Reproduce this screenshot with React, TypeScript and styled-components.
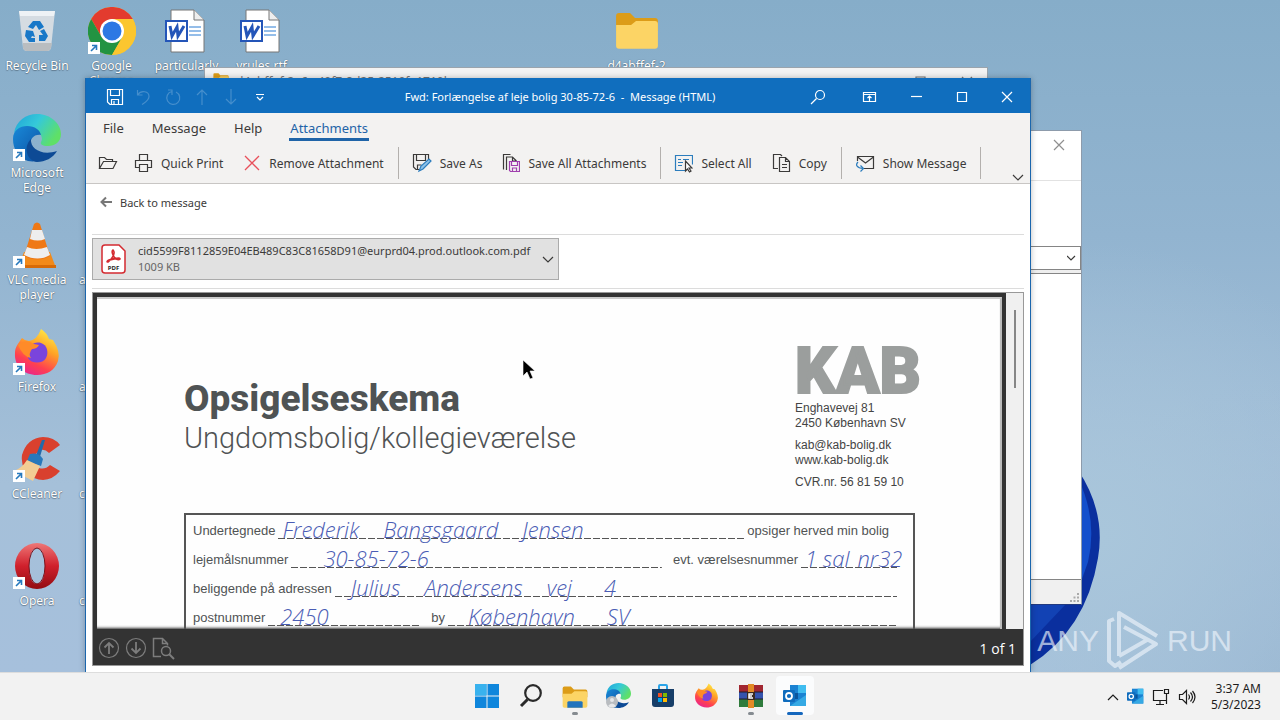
import React from "react";
import styled, { createGlobalStyle, css } from "styled-components";

const ui = '"Noto Sans", "Open Sans", sans-serif';
const print = '"Liberation Sans", Arial, sans-serif';

const GlobalStyle = createGlobalStyle`
  * { box-sizing: border-box; }
  body { margin: 0; font-family: ${ui}; font-size: 12px; color: #3b3a39; overflow: hidden; }
  button { font: inherit; color: inherit; background: none; border: 0; padding: 0; cursor: default; }
  svg { display: block; flex: none; }
  h1, h2, p { margin: 0; }
`;

/* ---------- desktop ---------- */

const Screen = styled.div`
  display: flex;
  flex-direction: column;
  height: 100vh;
`;

const Desktop = styled.main`
  position: relative;
  flex: 1;
  min-height: 0;
  overflow: hidden;
  background: linear-gradient(180deg, #86adc9 0%, #92b4d0 35%, #a5c0d9 72%, #a6c0dc 100%);
`;

const Glow = styled.div`
  position: absolute;
  inset: 0;
  background: radial-gradient(circle at 86% 80%, #a9c6db 0, #a4c0d800 24%),
    radial-gradient(circle at 100% 100%, #9ab7d2 0, #9ab7d200 20%);
`;

const Bloom = styled.svg`
  position: absolute;
  right: 180px;
  bottom: 0;
`;

const IconGrid = styled.div`
  position: relative;
  display: grid;
  grid-template-columns: 74px repeat(8, 75px);
  grid-auto-rows: 107px;
  padding-top: 6px;
`;

const Shortcut = styled.button<{ $col: number; $row: number; $start?: boolean }>`
  grid-column: ${(p) => p.$col};
  grid-row: ${(p) => p.$row};
  display: flex;
  flex-direction: column;
  align-items: ${(p) => (p.$start ? "flex-start" : "center")};
  gap: 2px;
  padding-left: ${(p) => (p.$start ? "5px" : "0")};
  min-width: 0;
  color: #fff;
  line-height: 15px;
  text-shadow: 0 0 1px #456, 0 1px 1px #4568;
`;

const IconBox = styled.span`
  position: relative;
  display: grid;
  place-items: center;
  width: 48px;
  height: 50px;
`;

const Arrow = styled.svg`
  position: absolute;
  left: 0;
  bottom: 2px;
`;

/* ---------- background windows ---------- */

const ExplorerWindow = styled.section`
  position: absolute;
  top: 67px;
  left: 204px;
  right: 292px;
  height: 300px;
  display: flex;
  align-items: flex-start;
  gap: 7px;
  padding: 5px 14px 0 8px;
  background: #f3f3f3;
  border: 1px solid #9aa4ad;
  color: #777;
`;

const ExplorerTitle = styled.span`
  flex: 1;
  line-height: 18px;
`;

const ExplorerControls = styled.div`
  display: flex;
  gap: 34px;
  padding-top: 3px;
`;

const ArchiveWindow = styled.section`
  position: absolute;
  top: 130px;
  right: 198px;
  width: 40%;
  height: 475px;
  display: flex;
  flex-direction: column;
  background: #fff;
  border: 1px solid #8d9bab;
  border-bottom-color: #223a80;
`;

const ArchiveTitle = styled.div`
  display: flex;
  justify-content: flex-end;
  height: 50px;
  padding: 8px 16px;
  border-bottom: 1px solid #e2e2e2;
  color: #8f8f8f;
`;

const ArchiveTools = styled.div`
  height: 65px;
`;

const ArchiveSelect = styled.button`
  display: flex;
  align-items: center;
  justify-content: flex-end;
  height: 24px;
  padding-right: 4px;
  border: 1px solid #858585;
`;

const ArchiveList = styled.div`
  flex: 1;
  margin-top: 3px;
  border: 1px solid #858585;
  border-width: 1px 0;
  box-shadow: 0 -3px 0 #eee;
`;

const ArchiveStatus = styled.div`
  display: flex;
  align-items: flex-end;
  justify-content: flex-end;
  height: 24px;
  padding: 2px;
  background: #f0f0f0;
`;

/* ---------- message window ---------- */

const MailWindow = styled.section`
  position: absolute;
  top: 78px;
  left: 85px;
  right: 249px;
  bottom: 0;
  display: flex;
  flex-direction: column;
  background: #fff;
  border: 1px solid #1b66ad;
  border-width: 0 1px;
  box-shadow: 0 0 6px #0004;
`;

const TitleBar = styled.header`
  display: flex;
  align-items: center;
  height: 35px;
  padding: 2px 16px 0 20px;
  background: #106ebe;
  color: #fff;
  font-size: 11px;
`;

const QuickAccess = styled.div`
  display: flex;
  flex: 1;
  align-items: center;
  gap: 11px;
`;

const WindowControls = styled.div`
  display: flex;
  flex: 1;
  align-items: center;
  justify-content: flex-end;
  gap: 30px;
`;

const BarButton = styled.button<{ $dim?: boolean }>`
  opacity: ${(p) => (p.$dim ? 0.22 : 1)};
`;

const Ribbon = styled.div`
  display: flex;
  flex-direction: column;
  height: 71px;
  background: #f3f2f1;
  border-bottom: 1px solid #c8c6c4;
`;

const Tabs = styled.nav`
  display: flex;
  gap: 26px;
  padding: 6px 16px 0;
  height: 30px;
  font-size: 13px;
`;

const Tab = styled.button<{ $active?: boolean }>`
  height: 22px;
  padding: 0 1px;
  line-height: 19px;
  border-bottom: 3px solid transparent;
  ${(p) =>
    p.$active &&
    css`
      color: #1f64a8;
      border-bottom-color: #1f64a8;
    `}
`;

const Tools = styled.div`
  display: flex;
  align-items: center;
  height: 40px;
  padding: 0 6px 0 12px;
`;

const Tool = styled.button<{ $last?: boolean }>`
  display: flex;
  align-items: center;
  gap: 8px;
  height: 32px;
  margin-right: ${(p) => (p.$last ? 14 : 20)}px;
  white-space: nowrap;
`;

const OpenTool = styled(Tool)`
  margin-right: 16px;
`;

const Divider = styled.span`
  width: 1px;
  height: 32px;
  margin-right: 13px;
  background: #b3b0ad;
`;

const Expand = styled.button`
  align-self: flex-end;
  margin-left: auto;
  padding-bottom: 2px;
`;

const Body = styled.div`
  flex: 1;
  min-height: 0;
  display: flex;
  flex-direction: column;
  padding: 0 6px 6px;
`;

const BackRow = styled.div`
  display: flex;
  align-items: flex-start;
  height: 51px;
  padding: 9px 8px 0;
  border-bottom: 1px solid #dcdcdc;
  font-size: 11px;
`;

const BackButton = styled.button`
  display: flex;
  align-items: center;
  gap: 7px;
  height: 18px;
`;

const AttachmentRow = styled.div`
  display: flex;
  height: 54px;
  padding: 3px 0 8px;
  border-bottom: 1px solid #dcdcdc;
`;

const Attachment = styled.button`
  display: flex;
  align-items: center;
  gap: 12px;
  height: 42px;
  padding: 0 4px 0 8px;
  border: 1px solid #ababab;
  background: #e1e1e1;
  font-size: 11px;
  line-height: 16px;
  text-align: left;
`;

const FileSize = styled.span`
  display: block;
  color: #666;
`;

const Preview = styled.div`
  position: relative;
  flex: 1;
  min-height: 0;
  display: flex;
  flex-direction: column;
  margin-top: 3px;
  background: #333;
  border: 1px solid #999;
`;

const PageArea = styled.div`
  flex: 1;
  min-height: 0;
  display: flex;
  padding: 4px 0 0 4px;
`;

const Paper = styled.article`
  flex: 1;
  min-width: 0;
  overflow: hidden;
  padding: 48px 85px 0 87px;
  background: #fefefe;
  border-top: 2px solid #ccc;
  border-right: 2px solid #bbb;
  color: #505354;
  font-family: ${print};
  box-shadow: inset 0 -3px 3px -2px #333;
`;

const ScrollTrack = styled.div`
  width: 17px;
  margin: -4px 0 0 4px;
  padding: 17px 7px 0 8px;
  background: #f0f0f0;
`;

const ScrollThumb = styled.div`
  width: 2px;
  height: 78px;
  background: #868686;
`;

const PreviewBar = styled.footer`
  display: flex;
  align-items: center;
  gap: 5px;
  height: 36px;
  padding: 2px 7px 0 5px;
  color: #7d7d7d;
`;

const PageCount = styled.span`
  margin-left: auto;
  color: #fff;
  font-family: "Open Sans", sans-serif;
  font-size: 14px;
`;

/* ---------- scanned form ---------- */

const Letterhead = styled.div`
  display: flex;
  justify-content: space-between;
  height: 166px;
`;

const FormTitle = styled.h1`
  padding-top: 29px;
  font-family: Roboto, sans-serif;
  font-size: 37px;
  line-height: 46px;
  font-weight: 800;
  color: #4f5354;
`;

const FormSubtitle = styled.h2`
  font-family: Roboto, sans-serif;
  font-size: 29px;
  line-height: 32px;
  font-weight: 300;
`;

const Sender = styled.address`
  width: 120px;
  font-size: 12px;
  line-height: 15px;
  font-style: normal;
  white-space: nowrap;
  color: #444;
`;

const Brand = styled.p`
  height: 54px;
  font-family: Roboto, sans-serif;
  font-size: 64px;
  line-height: 50px;
  font-weight: 900;
  color: #9b9e9d;
  -webkit-text-stroke: 2px #9b9e9d;
`;

const SenderLine = styled.p<{ $spaced?: boolean }>`
  margin-top: ${(p) => (p.$spaced ? "7px" : "0")};
`;

const FormBox = styled.div`
  border: 2px solid #555;
  padding: 0 16px 0 7px;
  height: 400px;
`;

const Line = styled.div`
  display: flex;
  align-items: flex-end;
  gap: 3px;
  height: 29px;
  padding-bottom: 5px;
  font-size: 13px;
  line-height: 16px;
  white-space: nowrap;
`;

const Blank = styled.span<{ $width?: number }>`
  display: flex;
  flex: ${(p) => (p.$width ? `0 0 ${p.$width}px` : "1")};
  min-width: 0;
  height: 17px;
  align-items: flex-end;
  background: repeating-linear-gradient(90deg, #555 0 7px, #5550 7px 9px) bottom / 100% 1px no-repeat;
`;

const Ink = styled.span<{ $before: number }>`
  margin-left: ${(p) => p.$before}px;
  color: #4a5cb4;
  font-family: "Open Sans", sans-serif;
  font-size: 22px;
  line-height: 20px;
  font-style: italic;
  font-weight: 300;
`;

const Space = styled.span`
  width: 5px;
`;

/* ---------- overlays ---------- */

const Pointer = styled.svg`
  position: absolute;
  left: 523px;
  top: 360px;
`;

const Watermark = styled.div`
  position: absolute;
  right: 48px;
  bottom: 0;
  display: flex;
  align-items: center;
  gap: 7px;
  color: #eef4fb;
  opacity: 0.65;
  font-family: "Liberation Sans Narrow", "Liberation Sans", sans-serif;
  font-size: 30px;
  line-height: 62px;
`;

/* ---------- taskbar ---------- */

const Taskbar = styled.footer`
  display: grid;
  grid-template-columns: 1fr auto 1fr;
  height: 48px;
  background: #f2f2f2;
  border-top: 1px solid #ddd;
`;

const Apps = styled.nav`
  grid-column: 2;
  display: flex;
  padding-left: 1px;
`;

const AppButton = styled.button<{ $active?: boolean; $open?: boolean }>`
  display: flex;
  flex-direction: column;
  align-items: center;
  justify-content: flex-end;
  gap: 4px;
  width: 38px;
  height: 39px;
  margin: 3px 3px 0;
  border-radius: 4px;
  background: ${(p) => (p.$active ? "#fbfcfd" : "transparent")};

  &::after {
    content: "";
    width: ${(p) => (p.$active ? 16 : 6)}px;
    height: 3px;
    border-radius: 2px;
    background: ${(p) => (p.$active ? "#1567bd" : p.$open ? "#858b90" : "transparent")};
  }
`;

const Tray = styled.div`
  display: flex;
  align-items: center;
  justify-content: flex-end;
  gap: 8px;
  padding-right: 19px;
  color: #1c1c1c;
`;

const Clock = styled.time`
  margin-left: 7px;
  font-size: 12px;
  line-height: 16px;
  text-align: right;
`;

/* ---------- drawings ---------- */

const stroke = { fill: "none", stroke: "currentColor", strokeWidth: 1.2 } as const;

const Glyph = ({ d, w = 18, h = 18, children }: { d?: string; w?: number; h?: number; children?: React.ReactNode }) => (
  <svg width={w} height={h} viewBox={`0 0 ${w} ${h}`} {...stroke} aria-hidden="true">
    {d && <path d={d} />}
    {children}
  </svg>
);

const RecycleBin = () => (
  <svg width="38" height="44" viewBox="0 0 38 44">
    <path d="M1 2h36l-4 37q-1 3-4 3H9q-3 0-4-3z" fill="#d5dce2" />
    <path d="M1 2h36l-1 5H2z" fill="#eef2f5" />
    <path d="M5 34h29l-1 5q-1 3-4 3H9q-3 0-4-3z" fill="#b9bdc0" />
    <g fill="#1878c8">
      <path d="M15 12h7l4 6-5 3-3-5-3 4-5-2z" />
      <path d="M26 20l4 7-3 5h-6v-6h4l-3-4z" />
      <path d="M8 21l7 1 2 6-3-1-1 2h4v4h-6l-4-6z" />
    </g>
  </svg>
);

const Chrome = () => (
  <svg width="48" height="48" viewBox="0 0 48 48">
    <circle cx="24" cy="24" r="24" fill="#fbc62f" />
    <path d="M3.200 12A24 24 0 0 1 44.800 12H24L13.600 30z" fill="#e33b2e" />
    <path d="M3.200 12A24 24 0 0 0 24 48l10.400-18H13.600z" fill="#229342" />
    <path d="M24 48a24 24 0 0 0 20.800-36H24l10.400 18z" fill="#fbc62f" />
    <circle cx="24" cy="24" r="12" fill="#fff" />
    <circle cx="24" cy="24" r="9.500" fill="#2d78e4" />
  </svg>
);

const WordDoc = () => (
  <svg width="44" height="44" viewBox="0 0 44 44">
    <path d="M6 1h23l10 10v32H6z" fill="#fff" stroke="#777" />
    <path d="M29 1v10h10" fill="#eee" stroke="#777" />
    <path d="M24 18h12M24 22h12M24 26h12" stroke="#2b7cd3" />
    <path d="M1 12h21v20H1z" fill="#fff" stroke="#2455b8" strokeWidth="2" />
    <path d="M5 17l2 10 5-9 1 9 6-10" fill="none" stroke="#2455b8" strokeWidth="3" />
  </svg>
);

const Edge = ({ size = 48 }: { size?: number }) => (
  <svg width={size} height={size} viewBox="0 0 48 48">
    <defs>
      <linearGradient id="edgeTop" x1="0" x2="1" y1="0" y2=".5">
        <stop offset="0" stopColor="#1fa3d8" />
        <stop offset=".5" stopColor="#35c9d9" />
        <stop offset="1" stopColor="#5fe067" />
      </linearGradient>
      <linearGradient id="edgeLow" x1="0" x2="1" y1="0" y2="1">
        <stop offset="0" stopColor="#1989d8" />
        <stop offset="1" stopColor="#0c4ea0" />
      </linearGradient>
    </defs>
    <path d="M1 19C3 7 13 0 24 0c14 0 24 10 24 20 0 8-6 12-13 12-6 0-8-2-7-4 2-3 1-8-5-11C16 13 6 13 1 19z" fill="url(#edgeTop)" />
    <path d="M0 25c0-9 7-13 14-13 8 0 13 4 14 9-7-1-12 4-10 12 2 6 7 10 13 11-4 3-10 4-16 3C5 44 0 35 0 25z" fill="url(#edgeLow)" />
    <path d="M18 25c-1 10 11 17 26 12-4 7-12 11-20 11-9-1-15-14-6-23z" fill="#0d4a95" />
  </svg>
);

const Vlc = () => (
  <svg width="40" height="48" viewBox="0 0 40 48">
    <path d="M7 31h26l6 16H1z" fill="#f28a1a" />
    <path d="M1 44h38v3H1z" fill="#d76b08" />
    <path d="M17 3q3-3 6 0l10 32q-12 7-26 0z" fill="#ef7815" />
    <path d="M15 9h10l3 9q-7 3-15 0zM10 26q9 4 20 0l3 8q-12 7-26 0z" fill="#eee" />
  </svg>
);

const Firefox = ({ size = 48 }: { size?: number }) => (
  <svg width={size} height={size} viewBox="0 0 48 48">
    <defs>
      <linearGradient id="fox" x1=".8" y1="0" x2=".3" y2="1">
        <stop offset="0" stopColor="#fff14a" />
        <stop offset=".4" stopColor="#ffa226" />
        <stop offset=".75" stopColor="#ff4050" />
        <stop offset="1" stopColor="#e8258f" />
      </linearGradient>
    </defs>
    <path d="M9 10q3 3 7 3 8-1 12-12 6 4 8 10l4 1q8 12 5 21C42 42 34 47 24 47 11 47 1 38 2 25c0-6 3-9 7-15z" fill="url(#fox)" />
    <path d="M15 24c0-6 6-11 13-9 6 2 8 9 5 15-3 6-15 6-18 0z" fill="#7a44dc" />
    <path d="M5 17q8-7 16-1l5 1q-2 4-7 4-4 5-1 9-8-1-13-13z" fill="#ff8b28" />
  </svg>
);

const CCleaner = () => (
  <svg width="48" height="46" viewBox="0 0 48 46">
    <path d="M47 9l-11 8q-7-7-13 1-3 9 3 14 6 2 11-3l10 6Q36 48 21 42 7 34 9 19 14 2 30 1q11 0 17 8z" fill="#d9402e" />
    <path d="M29 4h3l-6 20-4-2z" fill="#236aaa" />
    <path d="M17 18q8-2 13 5l-2 7-14-5z" fill="#2878bb" />
    <path d="M14 24l13 6-7 15L1 35q8-3 13-11z" fill="#f2cd94" />
  </svg>
);

const Opera = () => (
  <svg width="44" height="46" viewBox="0 0 44 46">
    <defs>
      <linearGradient id="opera" x1="0" y1="0" x2="0" y2="1">
        <stop offset="0" stopColor="#ee7777" />
        <stop offset=".5" stopColor="#d0202c" />
        <stop offset="1" stopColor="#920c12" />
      </linearGradient>
    </defs>
    <path fillRule="evenodd" d="M22 0a22 23 0 1 0 0 46 22 23 0 0 0 0-46zm0 5c5 0 8 7 8 18s-3 18-8 18-8-7-8-18 3-18 8-18z" fill="url(#opera)" />
    <ellipse cx="22" cy="23" rx="8" ry="18" fill="none" stroke="#7a1018" />
  </svg>
);

const Folder = ({ size = 44, open }: { size?: number; open?: boolean }) => (
  <svg width={size} height={size * 0.86} viewBox="0 0 44 38">
    <path d="M1 4q0-3 3-3h11l5 5h20q3 0 3 3v10H1z" fill="#dc9c18" />
    <path d="M1 13h15l5-4h19q3 0 3 3v22q0 3-3 3H4q-3 0-3-3z" fill="#fcd465" />
    {open && <path d="M9 37V28q0-2 3-2h20q3 0 3 2v9z" fill="#2274bd" />}
  </svg>
);

const ShortcutArrow = () => (
  <Arrow width="12" height="12" viewBox="0 0 12 12">
    <path d="M0 0h12v12H0z" fill="#fff" />
    <path d="M3 9l5-5M4 3.500h4.500V8" fill="none" stroke="#2779bd" strokeWidth="1.600" />
  </Arrow>
);

const OutlookIcon = ({ size = 24 }: { size?: number }) => (
  <svg width={size} height={size} viewBox="0 0 24 24">
    <path d="M7 1h16v21H7z" fill="#1a82d2" />
    <path d="M15 1h8v8h-8z" fill="#40bdf0" />
    <path d="M7 9h8v6H7z" fill="#0b559c" />
    <path d="M7 22l16-11v11z" fill="#35a9e4" />
    <rect x="0" y="6" width="12" height="12" rx="1" fill="#0f6cbd" />
    <circle cx="6" cy="12" r="3" fill="none" stroke="#fff" strokeWidth="1.800" />
  </svg>
);

const WinRar = () => (
  <svg width="24" height="24" viewBox="0 0 24 24">
    <path d="M0 1h24v7H0z" fill="#a12630" />
    <path d="M0 8h24v7H0z" fill="#3553ad" />
    <path d="M0 15h24v8H0z" fill="#2f7b3c" />
    <path d="M0 8h24M0 15h24" stroke="#221a2a" />
    <path d="M9 0h6v24H9z" fill="#e28a25" />
    <path d="M8 8h8v8H8z" fill="#3b2a20" />
    <path d="M14 10h-4v4h4M10 12h3" fill="none" stroke="#fff" strokeWidth="1.500" />
  </svg>
);

const Store = () => (
  <svg width="24" height="24" viewBox="0 0 24 24">
    <path d="M8 6V2q0-1 1-1h6q1 0 1 1v4" fill="none" stroke="#2ba4e8" strokeWidth="2" />
    <path d="M1 5h22v15q0 3-3 3H4q-3 0-3-3z" fill="#173e68" />
    <path d="M7 9h4v4H7z" fill="#f25022" />
    <path d="M12 9h4v4h-4z" fill="#7fba00" />
    <path d="M7 14h4v4H7z" fill="#00a4ef" />
    <path d="M12 14h4v4h-4z" fill="#ffb900" />
  </svg>
);

const StartLogo = () => (
  <svg width="24" height="24" viewBox="0 0 24 24">
    <path d="M0 0h11.500v11.500H0zM12.500 0H24v11.500H12.500zM0 12.500h11.500V24H0zM12.500 12.500H24V24H12.500z" fill="#0f86dc" />
    <path d="M0 0h11.500v11.500H0z" fill="#39b2ee" />
  </svg>
);

const SearchBig = () => (
  <svg width="24" height="24" viewBox="0 0 24 24" fill="none" stroke="#2a2a2a">
    <circle cx="14" cy="9" r="7.800" strokeWidth="2.200" />
    <path d="M8.500 15.500L2 22" strokeWidth="3" />
  </svg>
);

const EdgeProfile = () => (
  <svg width="25" height="25" viewBox="0 0 25 25">
    <Edge size={25} />
    <circle cx="6" cy="19" r="6" fill="#b9bcc0" />
    <circle cx="6" cy="17" r="2" fill="#e6e7e9" />
    <path d="M2 23q4-5 8 0-4 3-8 0z" fill="#e6e7e9" />
  </svg>
);

const PdfIcon = () => (
  <svg width="25" height="30" viewBox="0 0 25 30">
    <path d="M4 1h14l6 6v19q0 3-3 3H4q-3 0-3-3V4q0-3 3-3z" fill="#fff" stroke="#d42a30" strokeWidth="1.500" />
    <path d="M12 6c3 3-1 9-5 12-3 0 2-4 11-4 3 1-1 3-4 0-2-2-4-7-2-8z" fill="none" stroke="#d42a30" strokeWidth="1.600" />
    <text x="12.500" y="26" textAnchor="middle" fontFamily="Open Sans" fontSize="6" fontWeight="700" fill="#222">
      PDF
    </text>
  </svg>
);

const Chevron = ({ up }: { up?: boolean }) => <Glyph w={12} h={8} d={up ? "M1 7l5-5 5 5" : "M1 2l5 5 5-5"} />;

const desktopItems: { name: string; col: number; row: number; icon?: React.ReactNode; link?: boolean }[] = [
  { name: "Recycle Bin", col: 1, row: 1, icon: <RecycleBin /> },
  { name: "Microsoft Edge", col: 1, row: 2, icon: <Edge />, link: true },
  { name: "VLC media player", col: 1, row: 3, icon: <Vlc />, link: true },
  { name: "Firefox", col: 1, row: 4, icon: <Firefox />, link: true },
  { name: "CCleaner", col: 1, row: 5, icon: <CCleaner />, link: true },
  { name: "Opera", col: 1, row: 6, icon: <Opera />, link: true },
  { name: "Google Chrome", col: 2, row: 1, icon: <Chrome />, link: true },
  { name: "a", col: 2, row: 3 },
  { name: "av", col: 2, row: 4 },
  { name: "ca", col: 2, row: 5 },
  { name: "c", col: 2, row: 6 },
  { name: "particularly", col: 3, row: 1, icon: <WordDoc /> },
  { name: "vrules.rtf", col: 4, row: 1, icon: <WordDoc /> },
  { name: "d4abffef-2", col: 9, row: 1, icon: <Folder /> },
];

const ScannedForm = () => (
  <Paper>
    <Letterhead>
      <div>
        <FormTitle>Opsigelseskema</FormTitle>
        <FormSubtitle>Ungdomsbolig/kollegieværelse</FormSubtitle>
      </div>
      <Sender>
        <Brand>KAB</Brand>
        <SenderLine>Enghavevej 81</SenderLine>
        <SenderLine>2450 København SV</SenderLine>
        <SenderLine $spaced>kab@kab-bolig.dk</SenderLine>
        <SenderLine>www.kab-bolig.dk</SenderLine>
        <SenderLine $spaced>CVR.nr. 56 81 59 10</SenderLine>
      </Sender>
    </Letterhead>
    <FormBox>
      <Line>
        Undertegnede
        <Blank>
          <Ink $before={4}>Frederik</Ink>
          <Ink $before={24}>Bangsgaard</Ink>
          <Ink $before={24}>Jensen</Ink>
        </Blank>
        opsiger herved min bolig
        <Space />
      </Line>
      <Line>
        lejemålsnummer
        <Blank>
          <Ink $before={32}>30-85-72-6</Ink>
        </Blank>
        <Space />
        evt. værelsesnummer
        <Blank $width={96}>
          <Ink $before={4}>1 sal</Ink>
          <Ink $before={8}>nr32</Ink>
        </Blank>
      </Line>
      <Line>
        beliggende på adressen
        <Blank>
          <Ink $before={16}>Julius</Ink>
          <Ink $before={24}>Andersens</Ink>
          <Ink $before={24}>vej</Ink>
          <Ink $before={32}>4</Ink>
        </Blank>
      </Line>
      <Line>
        postnummer
        <Blank $width={152}>
          <Ink $before={12}>2450</Ink>
        </Blank>
        <Space />
        by
        <Blank>
          <Ink $before={20}>København</Ink>
          <Ink $before={32}>SV</Ink>
        </Blank>
      </Line>
    </FormBox>
  </Paper>
);

export default function App() {
  return (
    <Screen>
      <GlobalStyle />
      <Desktop>
        <Glow />
        <Bloom width="70" height="202" viewBox="0 0 70 202">
          <path d="M0 0h48q28 42 20 88-12 72-68 107z" fill="#0a2f9e" />
          <path d="M48 8q20 42 10 84l-10 28z" fill="#1450cc" />
          <path d="M0 172l36-38H0z" fill="#1242b4" />
        </Bloom>
        <IconGrid>
          {desktopItems.map((item) => (
            <Shortcut key={item.name} $col={item.col} $row={item.row} $start={!item.icon}>
              <IconBox>
                {item.icon}
                {item.link && <ShortcutArrow />}
              </IconBox>
              <span>{item.name}</span>
            </Shortcut>
          ))}
        </IconGrid>

        <ExplorerWindow>
          <Folder size={16} />
          <ExplorerTitle>d4abffef-2a6c-40f7-8d25-2510fe1710b</ExplorerTitle>
          <ExplorerControls>
            <Glyph w={12} h={12} d="M1 1h9v9H1z" />
            <Glyph w={12} h={12} d="M1 1l10 10M11 1L1 11" />
          </ExplorerControls>
        </ExplorerWindow>

        <ArchiveWindow>
          <ArchiveTitle>
            <Glyph w={12} h={12} d="M1 1l10 10M11 1L1 11" />
          </ArchiveTitle>
          <ArchiveTools />
          <ArchiveSelect aria-label="Folder path">
            <Glyph w={9} h={6} d="M0 1l4 4 4-4" />
          </ArchiveSelect>
          <ArchiveList />
          <ArchiveStatus>
            <svg width="9" height="9" viewBox="0 0 9 9" fill="#aaa">
              <path d="M7 0h2v2H7zM7 3.500h2v2H7zM7 7h2v2H7zM3.500 3.500h2v2h-2zM3.500 7h2v2h-2zM0 7h2v2H0z" />
            </svg>
          </ArchiveStatus>
        </ArchiveWindow>

        <MailWindow>
          <TitleBar>
            <QuickAccess>
              <BarButton aria-label="Save">
                <Glyph d="M1.500 1.500h15v15H4l-2.500-2.500zM4.500 1.500v6h9v-6M5.500 16.500v-5h7v5M8 16v-3" />
              </BarButton>
              <BarButton $dim aria-label="Undo">
                <Glyph d="M2.500 2v5h5M3 6.500C6 2 14 3 14 8.500c0 4-4 6-7 8" />
              </BarButton>
              <BarButton $dim aria-label="Redo">
                <Glyph d="M4 2h4v5M8 3.500A6.500 6.500 0 1 0 12 4" />
              </BarButton>
              <BarButton $dim aria-label="Previous item">
                <Glyph d="M9 17V2M4 7l5-5 5 5" />
              </BarButton>
              <BarButton $dim aria-label="Next item">
                <Glyph d="M9 1v15M4 11l5 5 5-5" />
              </BarButton>
              <BarButton aria-label="Customize">
                <Glyph d="M5 6.500h8M6 9l3 3 3-3" />
              </BarButton>
            </QuickAccess>
            <span>Fwd: Forlængelse af leje bolig 30-85-72-6&nbsp; -&nbsp; Message (HTML)</span>
            <WindowControls>
              <BarButton aria-label="Search">
                <Glyph w={22} h={16}>
                  <circle cx="10" cy="6" r="4.500" />
                  <path d="M6.500 9.500L1 15" />
                </Glyph>
              </BarButton>
              <BarButton aria-label="Ribbon display options">
                <Glyph w={16} h={12} d="M1.500 1.500h12v9h-12zM1.500 3.500h12M7.500 10V5M5.500 7l2-2 2 2" />
              </BarButton>
              <BarButton aria-label="Minimize">
                <Glyph w={16} h={12} d="M3 5.500h11" />
              </BarButton>
              <BarButton aria-label="Maximize">
                <Glyph w={16} h={12} d="M3.500 1.500h9v9h-9z" />
              </BarButton>
              <BarButton aria-label="Close">
                <Glyph w={14} h={12} d="M2 1l10 10M12 1L2 11" />
              </BarButton>
            </WindowControls>
          </TitleBar>

          <Ribbon>
            <Tabs>
              <Tab>File</Tab>
              <Tab>Message</Tab>
              <Tab>Help</Tab>
              <Tab $active>Attachments</Tab>
            </Tabs>
            <Tools>
              <OpenTool aria-label="Open">
                <Glyph w={20} d="M1.500 14.500V3.500h5l2 2h6v2.500M1.500 14.500l4-7h13l-3.500 7z" />
              </OpenTool>
              <Tool>
                <Glyph w={19} d="M5.500 6.500v-6h8v6M5.500 13.500h-4v-7h16v7h-4M5.500 10.500h8v7h-8z" />
                Quick Print
              </Tool>
              <Tool $last>
                <svg width="18" height="18" viewBox="0 0 18 18" stroke="#e8505b" strokeWidth="1.300">
                  <path d="M2 2l14 14M16 2L2 16" />
                </svg>
                Remove Attachment
              </Tool>
              <Divider />
              <Tool>
                <Glyph w={20} h={20}>
                  <path d="M9 16.500H4L1.500 14V1.500h15v6M4.500 1.500v6h9v-6M5.500 16v-4h4" />
                  <path d="M7 18l2-5 8-7 2 2-8 8z" fill="#8fc3ea" stroke="#2c7dbd" />
                </Glyph>
                Save As
              </Tool>
              <Tool $last>
                <Glyph h={20}>
                  <path d="M1.500 16.500v-15h7M4.500 17v-13h6l4 4M10.500 4v4h4" />
                  <path d="M7.500 8.500h10v10h-9l-1-1zM9.500 8.500v4h6v-4M10.500 18v-3h4v3" stroke="#a03fae" />
                </Glyph>
                Save All Attachments
              </Tool>
              <Divider />
              <Tool>
                <Glyph w={19} h={20}>
                  <path d="M11 17.500H1.500v-15h17v9M4 6.500h3M4 9.500h5M4 12.500h4M9 6.500h6" stroke="#2c7dbd" />
                  <path d="M11.500 8v10l2-2 2 3 1.500-1-2-3h3z" fill="#fff" />
                </Glyph>
                Select All
              </Tool>
              <Tool $last>
                <Glyph w={19} h={20} d="M6 15.500H1.500v-14h7l1.500 1.500M7.500 4.500h6l4 4v10h-10zM13.500 4.500v4h4M10 11.500h5M10 14.500h5" />
                Copy
              </Tool>
              <Divider />
              <Tool $last>
                <Glyph w={20} h={20}>
                  <path d="M2.500 8V3.500h16v12H9M2.500 4l8 6 8-6" />
                  <path d="M3 9c-3 3-1 6 5 6.500M5.500 12.500l3 3-3 3" stroke="#2c7dbd" />
                </Glyph>
                Show Message
              </Tool>
              <Divider />
              <Expand aria-label="Expand ribbon">
                <Chevron />
              </Expand>
            </Tools>
          </Ribbon>

          <Body>
            <BackRow>
              <BackButton>
                <svg width="13" height="12" viewBox="0 0 13 12" fill="none" stroke="#777" strokeWidth="2">
                  <path d="M12 6H2M6 1.500L1.500 6 6 10.500" />
                </svg>
                Back to message
              </BackButton>
            </BackRow>
            <AttachmentRow>
              <Attachment>
                <PdfIcon />
                <span>
                  cid5599F8112859E04EB489C83C81658D91@eurprd04.prod.outlook.com.pdf
                  <FileSize>1009 KB</FileSize>
                </span>
                <Chevron />
              </Attachment>
            </AttachmentRow>
            <Preview>
              <PageArea>
                <ScannedForm />
                <ScrollTrack>
                  <ScrollThumb />
                </ScrollTrack>
              </PageArea>
              <PreviewBar>
                <BarButton aria-label="Previous page">
                  <Glyph w={22} h={22}>
                    <circle cx="11" cy="11" r="9.500" />
                    <path d="M11 17V6M6.500 10.500L11 6l4.500 4.500" strokeWidth="1.800" />
                  </Glyph>
                </BarButton>
                <BarButton aria-label="Next page">
                  <Glyph w={22} h={22}>
                    <circle cx="11" cy="11" r="9.500" />
                    <path d="M11 5v11M6.500 11.500L11 16l4.500-4.500" strokeWidth="1.800" />
                  </Glyph>
                </BarButton>
                <BarButton aria-label="Find in document">
                  <Glyph w={24} h={24}>
                    <path d="M9 20.500H1.500v-18h9l5 5v2M10.500 2.500v5h5" strokeWidth="1.500" />
                    <circle cx="14" cy="15" r="4.500" strokeWidth="1.500" />
                    <path d="M17 18l5 5" strokeWidth="2" />
                  </Glyph>
                </BarButton>
                <PageCount>1 of 1</PageCount>
              </PreviewBar>
            </Preview>
          </Body>
        </MailWindow>

        <Watermark>
          ANY
          <svg width="54" height="62" viewBox="0 0 54 62" fill="none" stroke="currentColor" strokeWidth="4" strokeLinejoin="round">
            <path d="M8 9L3 11v40l6 5 6-4" />
            <path d="M13 46V3l38 23M18 17l32 17-37 24M13 46l28-16" />
          </svg>
          RUN
        </Watermark>
        <Pointer width="12" height="20" viewBox="0 0 12 20">
          <path d="M0 0v16l4-4 3 7 3-1-3-7h5z" fill="#000" stroke="#fff" strokeWidth=".6" />
        </Pointer>
      </Desktop>

      <Taskbar>
        <Apps>
          <AppButton aria-label="Start"><StartLogo /></AppButton>
          <AppButton aria-label="Search"><SearchBig /></AppButton>
          <AppButton aria-label="File Explorer" $open><Folder size={26} open /></AppButton>
          <AppButton aria-label="Edge"><EdgeProfile /></AppButton>
          <AppButton aria-label="Store"><Store /></AppButton>
          <AppButton aria-label="Firefox"><Firefox size={25} /></AppButton>
          <AppButton aria-label="WinRAR" $open><WinRar /></AppButton>
          <AppButton aria-label="Outlook" $active><OutlookIcon /></AppButton>
        </Apps>
        <Tray>
          <Chevron up />
          <OutlookIcon size={17} />
          <Glyph>
            <path d="M11 2.500H1.500v10h13V9M4 16.500h8M8 12.500v4M12.500 1.500h4v4h-4zM14.500 5.500V16" />
          </Glyph>
          <Glyph d="M1.500 6.500h3l4-4v13l-4-4h-3zM10.500 6.500q2 2.500 0 5M12.500 4.500q4 4.500 0 9M14.500 3q5 6 0 12" />
          <Clock>
            3:37 AM
            <br />
            5/3/2023
          </Clock>
        </Tray>
      </Taskbar>
    </Screen>
  );
}
